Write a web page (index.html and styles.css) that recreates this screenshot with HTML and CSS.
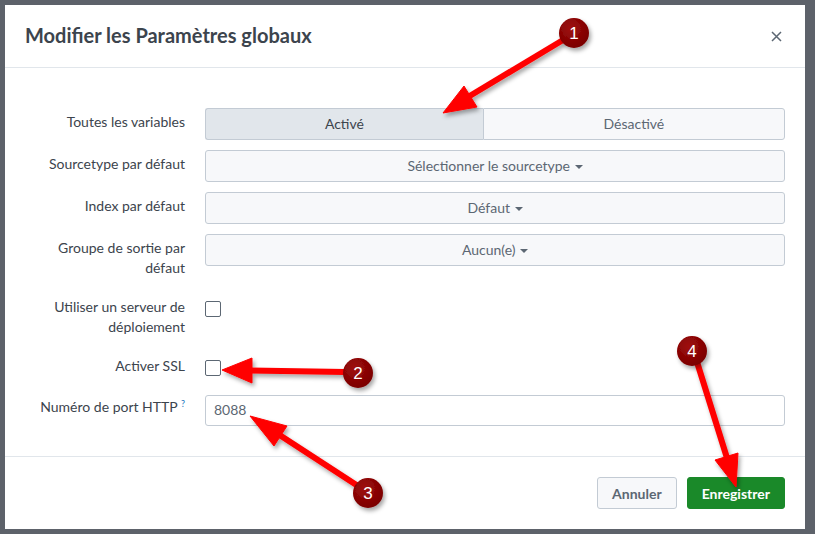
FILE: index.html
```html
<!DOCTYPE html>
<html lang="fr">
<head>
    <meta charset="UTF-8">
    <title>Modifier les Paramètres globaux</title>
    <link rel="stylesheet" href="styles.css">
</head>
<body>
    <div class="modal">
        <div class="modal-header">
            <h2>Modifier les Paramètres globaux</h2>
            <button class="close" aria-label="Fermer">
                <svg width="11" height="11" viewBox="0 0 11 11"><path d="M1 1L10 10M10 1L1 10" stroke="#5c6773" stroke-width="1.5"/></svg>
            </button>
        </div>

        <div class="modal-body">
            <div class="row">
                <label class="label">Toutes les variables</label>
                <div class="toggle">
                    <button class="seg active">Activé</button>
                    <button class="seg">Désactivé</button>
                </div>
            </div>
            <div class="row">
                <label class="label">Sourcetype par défaut</label>
                <button class="dropdown">Sélectionner le sourcetype <span class="caret"></span></button>
            </div>
            <div class="row">
                <label class="label">Index par défaut</label>
                <button class="dropdown">Défaut <span class="caret"></span></button>
            </div>
            <div class="row">
                <label class="label">Groupe de sortie par défaut</label>
                <button class="dropdown">Aucun(e) <span class="caret"></span></button>
            </div>
            <div class="row row-check">
                <label class="label">Utiliser un serveur de déploiement</label>
                <span class="checkbox"></span>
            </div>
            <div class="row row-check">
                <label class="label">Activer SSL</label>
                <span class="checkbox"></span>
            </div>
            <div class="row">
                <label class="label">Numéro de port HTTP <sup class="help">?</sup></label>
                <div class="input">8088</div>
            </div>
        </div>

        <div class="modal-footer">
            <button class="btn">Annuler</button>
            <button class="btn btn-primary">Enregistrer</button>
        </div>
    </div>

    <!-- Annotations drawn over the screenshot -->
    <svg class="notes" width="815" height="534" viewBox="0 0 815 534">
        <defs>
            <filter id="shadow" x="-20%" y="-20%" width="140%" height="140%">
                <feDropShadow dx="2" dy="3" stdDeviation="2" flood-color="#000" flood-opacity="0.35"/>
            </filter>
            <radialGradient id="dot" cx="40%" cy="35%" r="70%">
                <stop offset="0" stop-color="#a00c0c"/>
                <stop offset="1" stop-color="#780000"/>
            </radialGradient>
        </defs>
        <g filter="url(#shadow)" fill="#ff0000" stroke="#ff0000">
            <line x1="563" y1="40" x2="468" y2="97" stroke-width="6"/>
            <polygon points="443,113 464,86 477,107" stroke-width="1"/>

            <line x1="345" y1="372" x2="250" y2="370.5" stroke-width="6"/>
            <polygon points="222,370 252,358 252,383" stroke-width="1"/>

            <line x1="358" y1="486" x2="278" y2="434" stroke-width="6"/>
            <polygon points="250,416 287,426 274,446" stroke-width="1"/>

            <line x1="697" y1="362" x2="727" y2="458" stroke-width="6"/>
            <polygon points="736,487 738,453 715,460" stroke-width="1"/>
        </g>
        <g filter="url(#shadow)" fill="url(#dot)">
            <circle cx="574" cy="33" r="15"/>
            <circle cx="358" cy="373" r="15"/>
            <circle cx="368" cy="493" r="15"/>
            <circle cx="692" cy="351" r="15"/>
        </g>
        <g class="num" fill="#fff" text-anchor="middle">
            <text x="574" y="39">1</text>
            <text x="358" y="379">2</text>
            <text x="368" y="499">3</text>
            <text x="692" y="357">4</text>
        </g>
    </svg>
</body>
</html>
```

FILE: styles.css
```css
body {
    margin: 0;
    width: 815px;
    height: 534px;
    position: relative;
    overflow: hidden;
    background: #5d626a;
    font-family: Lato, "Liberation Sans", sans-serif;
    font-size: 14px;
    color: #3c444d;
}

.modal {
    margin: 5px;
    width: 800px;
    height: 524px;
    background: #fff;
    display: flex;
    flex-direction: column;
}

.modal-header {
    height: 62px;
    border-bottom: 1px solid #e1e6eb;
    display: flex;
    align-items: center;
    justify-content: space-between;
    padding: 0 23px 0 20px;
}

.modal-header h2 {
    margin: 0;
    font-size: 20px;
    font-weight: 700;
    color: #3c444d;
    padding-bottom: 2px;
}

.close {
    border: none;
    background: none;
    padding: 0;
    display: flex;
    cursor: pointer;
}

.modal-body {
    flex: 1;
    padding: 40px 20px 0 20px;
}

.row {
    display: grid;
    grid-template-columns: 160px 1fr;
    column-gap: 20px;
    margin-bottom: 10px;
    min-height: 32px;
}

.label {
    text-align: right;
    padding-top: 4px;
    line-height: 20px;
    color: #3c444d;
}

.row-check {
    min-height: 36px;
}

.row-check .label {
    padding-top: 9px;
}

.help {
    color: #1a75bc;
    font-size: 9px;
    vertical-align: top;
    position: relative;
    top: -3px;
}

.toggle {
    display: flex;
    height: 32px;
}

.seg {
    flex: 1;
    font: inherit;
    color: #5c6773;
    background: #f7f8fa;
    border: 1px solid #c3cbd4;
    border-radius: 0 3px 3px 0;
    padding-bottom: 2px;
    cursor: pointer;
}

.seg.active {
    flex: 0 0 47.9%;
    background: #e1e6eb;
    color: #3c444d;
    border-right: none;
    border-radius: 3px 0 0 3px;
}

.dropdown {
    height: 32px;
    font: inherit;
    color: #5c6773;
    background: #f7f8fa;
    border: 1px solid #c3cbd4;
    border-radius: 3px;
    padding-bottom: 2px;
    cursor: pointer;
}

.caret {
    display: inline-block;
    width: 0;
    height: 0;
    border-left: 4px solid transparent;
    border-right: 4px solid transparent;
    border-top: 4px solid #5c6773;
    vertical-align: middle;
    margin-left: 1px;
}

.checkbox {
    width: 14px;
    height: 14px;
    border: 1px solid #5c6773;
    border-radius: 2px;
    margin-top: 13px;
    background: #fff;
}

.input {
    height: 31px;
    line-height: 28px;
    margin-top: 2px;
    box-sizing: border-box;
    border: 1px solid #c3cbd4;
    border-radius: 3px;
    padding: 0 8px;
    color: #5c6773;
}

.modal-footer {
    border-top: 1px solid #e1e6eb;
    padding: 20px;
    display: flex;
    justify-content: flex-end;
    gap: 10px;
}

.btn {
    height: 32px;
    padding: 0 14px;
    font: inherit;
    font-weight: 700;
    font-size: 14px;
    color: #5c6773;
    background: #f7f8fa;
    border: 1px solid #c3cbd4;
    border-radius: 3px;
    cursor: pointer;
}

.btn-primary {
    color: #fff;
    background: #1a8929;
    border-color: #1a8929;
}

/* Annotation layer */
.notes {
    position: absolute;
    top: 0;
    left: 0;
    pointer-events: none;
}

.num text {
    font-family: "Liberation Sans", Arial, sans-serif;
    font-size: 17px;
}
```
